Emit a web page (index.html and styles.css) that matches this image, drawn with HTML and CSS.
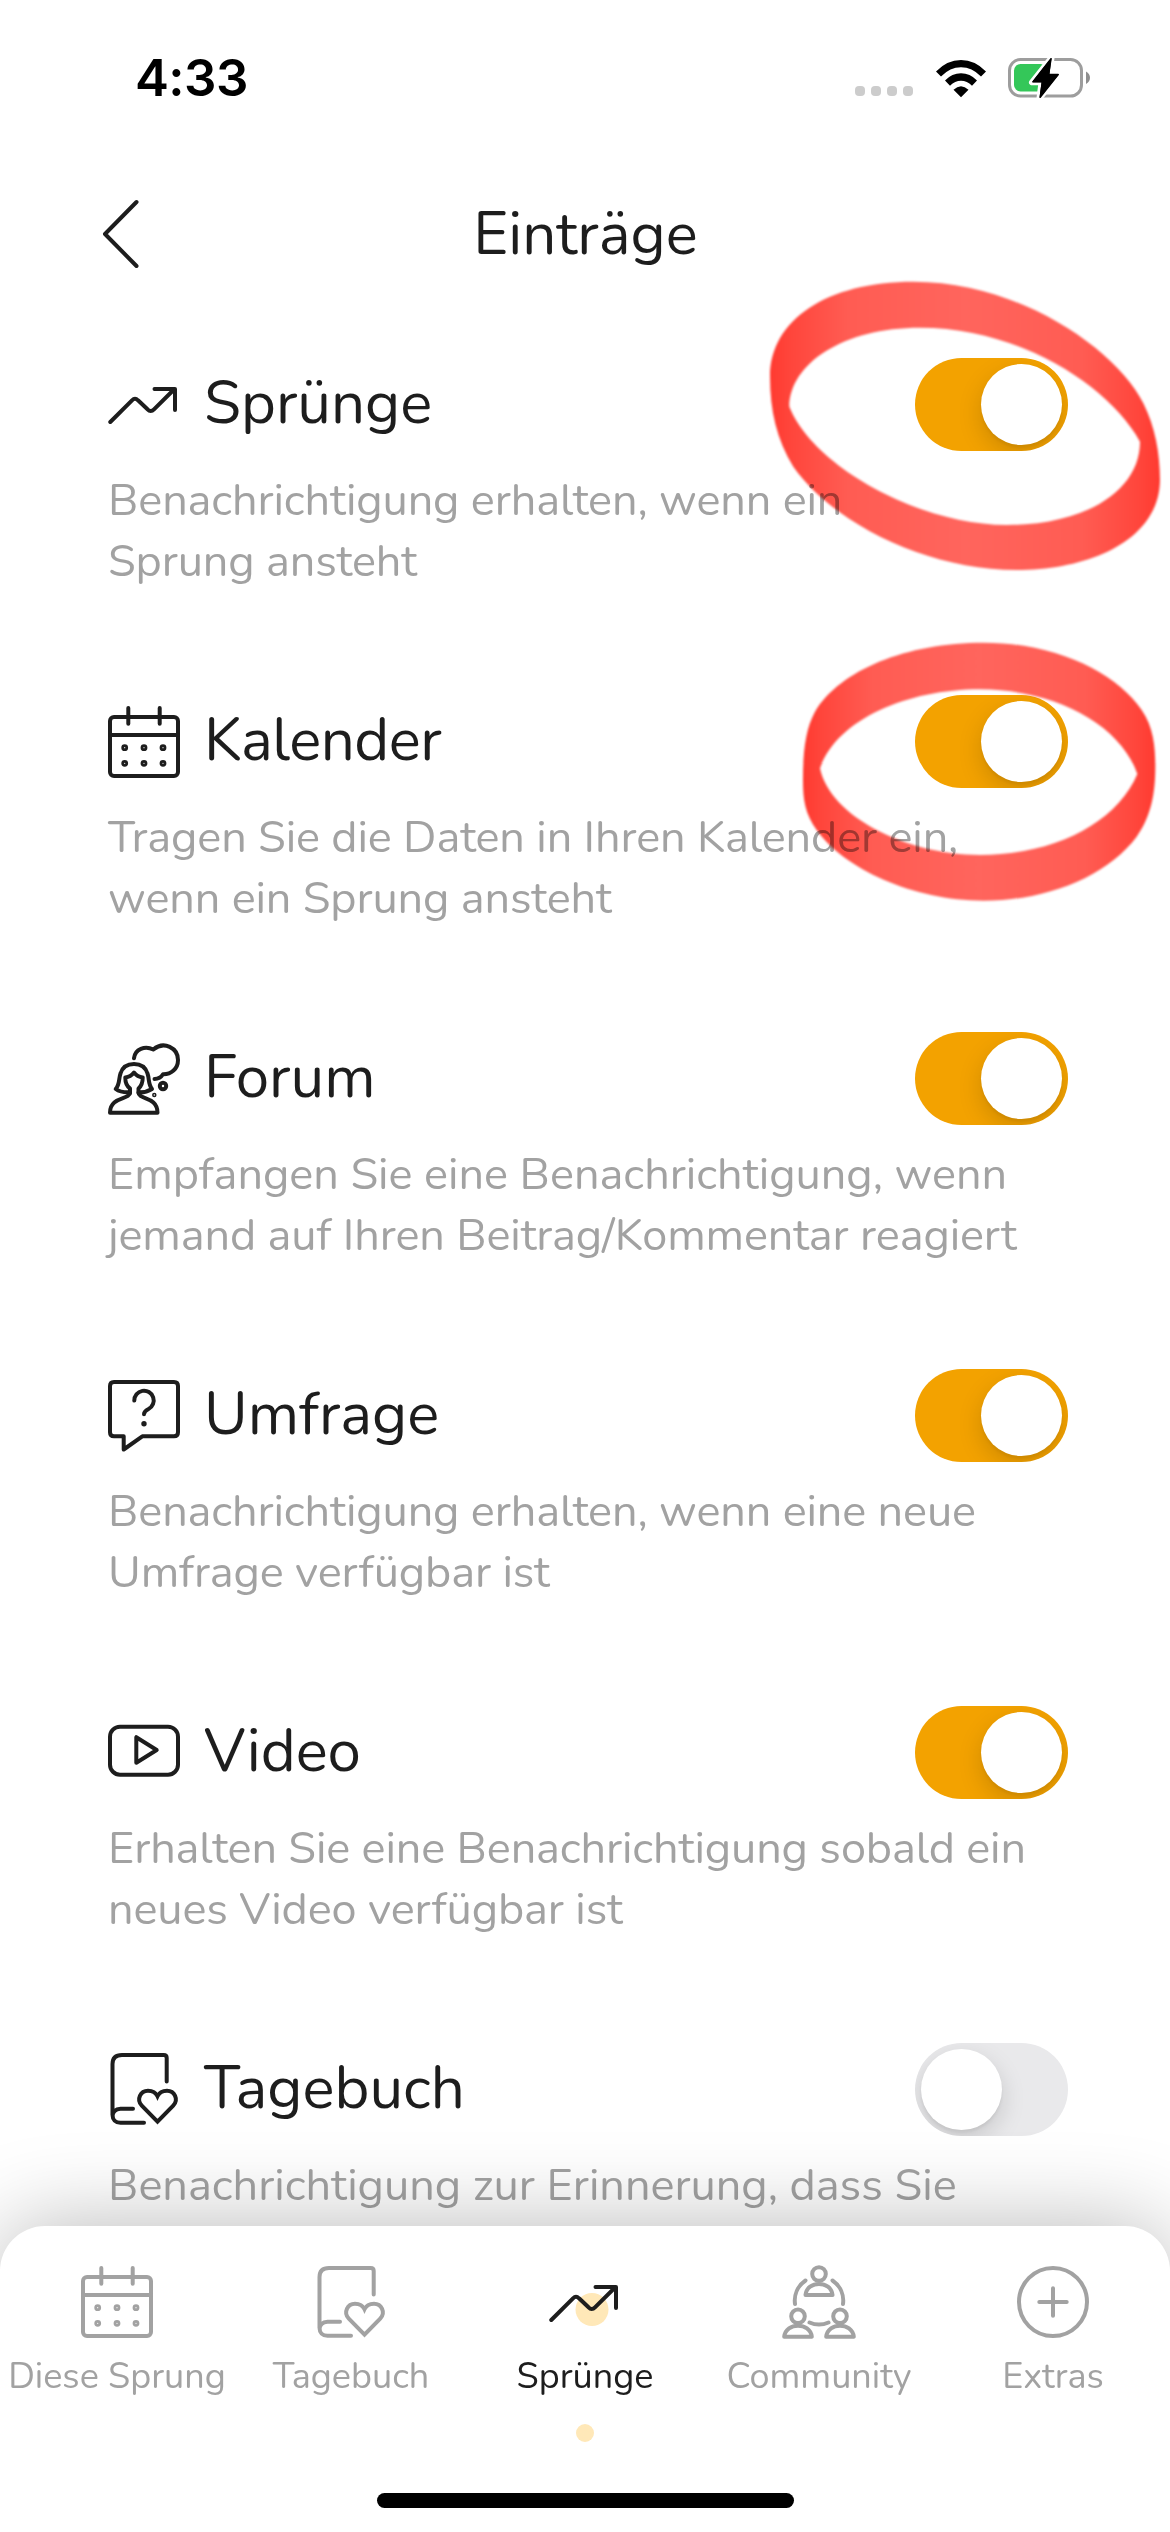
FILE: index.html
```html
<!DOCTYPE html>
<html lang="de">
<head>
<meta charset="utf-8">
<title>Einträge</title>
<link rel="stylesheet" href="styles.css">
</head>
<body>
<svg class="sprite" aria-hidden="true">
  <symbol id="i-trend" viewBox="0 0 72 72">
    <path d="M2.3 54 24 32.3Q27 29.3 30 32.3L39.5 41.3Q42.7 44.6 46 41.3L66.5 21M46.5 21H67V42"/>
  </symbol>
  <symbol id="i-calendar" viewBox="0 0 72 72">
    <rect x="2" y="11" width="68" height="59" rx="4"/>
    <path d="M2 29H70M20.3 2V17.7M51.7 2V17.7"/>
    <g stroke-width="2.8"><circle cx="16.7" cy="41.7" r="2"/><circle cx="36" cy="41.7" r="2"/><circle cx="55" cy="41.7" r="2"/><circle cx="16.7" cy="57.3" r="2"/><circle cx="36" cy="57.3" r="2"/><circle cx="55" cy="57.3" r="2"/></g>
  </symbol>
  <symbol id="i-forum" viewBox="0 0 72 72">
    <path d="M26 15.3C27 6 37 2.5 45.3 6.5C56-2.5 70 5 70 17C70 26 63 31.5 55 31.3C53 34.5 50.5 36 46.5 36"/>
    <circle cx="55" cy="43" r="3.2"/>
    <circle cx="46.3" cy="52" r="1.5" stroke-width="1.5"/>
    <path d="M21.5 49.3C16 49.5 11 48.5 7.7 46C12 41 10.5 36 12.5 30.5C14.5 24 20 21 26 21C32 21 37.5 24 39.5 30.5C41.5 36 40 41 44 46C40 48.5 36 49.5 31 49.3"/>
    <path d="M22 50V45.5C18.5 43 17.3 40 17.3 34.5C21 34 24 32 26 29.5C28 32 31 34 34.7 34.5C34.7 40 33.5 43 30.5 45.5V50"/>
    <path d="M22 49.5C22 57 2 53 2 69.7H49.5C49.5 53 30.5 57 30.5 49.5"/>
  </symbol>
  <symbol id="i-survey" viewBox="0 0 72 72">
    <path d="M6 2H66Q70 2 70 6V52.3Q70 56.3 66 56.3H34.3L15.7 69.5V56.3H6Q2 56.3 2 52.3V6Q2 2 6 2Z"/>
    <path d="M26.3 20.6A9.7 9.7 0 1 1 40.5 29Q36 31.2 36 34.3"/>
    <circle class="solid" cx="36" cy="43.7" r="2.7"/>
  </symbol>
  <symbol id="i-video" viewBox="0 0 72 72">
    <rect x="2" y="9.7" width="68" height="48" rx="10"/>
    <path d="M28.3 20.2V45.8L48.7 33Z"/>
  </symbol>
  <symbol id="i-diary" viewBox="0 0 72 72">
    <path d="M58.7 28.5V5Q58.7 2 55.7 2H14Q4.5 2 4.5 11V62M36 69.8H12.5C2 69.8 2 55.8 12.5 55.8H25"/>
    <path stroke-linejoin="miter" d="M49.5 68.6 33.8 52.6C28 46.5 32.5 37.7 40 37.7C45 37.7 48 40 49.5 43.2C51 40 54 37.7 59 37.7C66.5 37.7 71 46.5 65.2 52.6Z"/>
  </symbol>
  <symbol id="i-community" viewBox="-2 -2 76 76">
    <circle cx="36" cy="8" r="6.8"/><path d="M22.5 29C24 14.3 48 14.3 49.5 29Z"/>
    <circle cx="15" cy="50.3" r="6.8"/><path d="M1.2 70.8C3 56 27 56 28.8 70.8Z"/>
    <circle cx="57" cy="50.3" r="6.8"/><path d="M43.2 70.8C45 56 69 56 70.8 70.8Z"/>
    <path d="M12 38C10.8 29 14.5 20 22.5 14.5M60 38C61.2 29 57.5 20 49.5 14.5M26.5 56.5Q36 60.7 45.5 56.5"/>
  </symbol>
  <symbol id="i-plus" viewBox="0 0 72 72">
    <circle cx="36" cy="36" r="34"/><path d="M22.3 36H49.7M36 22.3V49.7"/>
  </symbol>
</svg>

<div class="screen">
  <div class="status">
    <span class="time">4:33</span>
    <div class="indicators">
      <div class="dots"><i></i><i></i><i></i><i></i></div>
      <svg class="wifi" width="50" height="38" viewBox="0 0 50 38">
        <path d="M0 11.5Q11 0 25 0T50 11.5L45 16.5Q36 7.3 25 7.3T5 16.5Z"/>
        <path d="M9 20.5Q16 13.3 25 13.3T41 20.5L36 25.7Q31 20.8 25 20.8T14 25.7Z"/>
        <path d="M17.5 29.8Q25 22.8 32.5 29.8L25 37.3Z"/>
      </svg>
      <svg class="battery" width="84" height="42" viewBox="0 0 84 42">
        <rect x="1.5" y="2.5" width="72" height="36.6" rx="11" fill="none" stroke="#9d9d9d" stroke-width="3"/>
        <rect x="6" y="7" width="33" height="27.5" rx="6.5" fill="#34c759"/>
        <path d="M78 14.5Q82 17 82 20.8T78 27Z" fill="#8e8e8e"/>
        <path d="M43.5.8 24 25.3H33.5L31.5 41.2 51 17.2H41.5Z" fill="#000" stroke="#fff" stroke-width="6" stroke-linejoin="round" paint-order="stroke"/>
        <path d="M43 1.8 25 24.7H34.5L32.2 40.2 50.2 17.6H40.5Z" fill="#000" stroke="#000" stroke-width="1.5" stroke-linejoin="round"/>
      </svg>
    </div>
  </div>

  <header class="header">
    <svg class="back" width="40" height="72" viewBox="0 0 40 72"><path d="M35.5 4 4 36 35.5 68"/></svg>
    <h1>Einträge</h1>
  </header>

  <main class="list">
    <section class="item">
      <div class="row"><svg class="icon raised"><use href="#i-trend"/></svg><h2>Sprünge</h2><span class="toggle on"></span></div>
      <p>Benachrichtigung erhalten, wenn ein<br>Sprung ansteht</p>
    </section>
    <section class="item">
      <div class="row"><svg class="icon"><use href="#i-calendar"/></svg><h2 class="tight">Kalender</h2><span class="toggle on"></span></div>
      <p>Tragen Sie die Daten in Ihren Kalender ein,<br>wenn ein Sprung ansteht</p>
    </section>
    <section class="item">
      <div class="row"><svg class="icon"><use href="#i-forum"/></svg><h2>Forum</h2><span class="toggle on"></span></div>
      <p><span class="normal">Empfangen Sie eine Benachrichtigung, wenn</span><br>jemand auf Ihren Beitrag/Kommentar reagiert</p>
    </section>
    <section class="item">
      <div class="row"><svg class="icon"><use href="#i-survey"/></svg><h2>Umfrage</h2><span class="toggle on"></span></div>
      <p>Benachrichtigung erhalten, wenn eine neue<br>Umfrage verfügbar ist</p>
    </section>
    <section class="item">
      <div class="row"><svg class="icon"><use href="#i-video"/></svg><h2>Video</h2><span class="toggle on"></span></div>
      <p>Erhalten Sie eine Benachrichtigung sobald ein<br>neues Video verfügbar ist</p>
    </section>
    <section class="item">
      <div class="row"><svg class="icon raised"><use href="#i-diary"/></svg><h2>Tagebuch</h2><span class="toggle"></span></div>
      <p><span class="normal">Benachrichtigung zur Erinnerung, dass Sie</span></p>
    </section>
  </main>

  <nav class="tabs">
    <a class="tab"><svg class="icon"><use href="#i-calendar"/></svg><span>Diese Sprung</span></a>
    <a class="tab"><svg class="icon"><use href="#i-diary"/></svg><span>Tagebuch</span></a>
    <a class="tab active"><svg class="icon"><circle class="glow" cx="43" cy="43.5" r="16.5"/><use href="#i-trend"/></svg><span>Sprünge</span><i class="marker"></i></a>
    <a class="tab"><svg class="icon wide"><use href="#i-community"/></svg><span>Community</span></a>
    <a class="tab"><svg class="icon"><use href="#i-plus"/></svg><span>Extras</span></a>
    <div class="home"></div>
  </nav>

  <!-- marker strokes circling the first two switches -->
  <svg class="marks" width="1170" height="960" viewBox="0 0 1170 960">
    <defs>
      <linearGradient id="ink">
        <stop offset="0" stop-color="#ff3a30"/><stop offset=".05" stop-color="#ff453b"/><stop offset=".2" stop-color="#ff5c53"/>
        <stop offset=".5" stop-color="#ff655d"/>
        <stop offset=".8" stop-color="#ff5c53"/><stop offset=".95" stop-color="#ff453b"/><stop offset="1" stop-color="#ff3a30"/>
      </linearGradient>
    </defs>
    <g fill="url(#ink)" fill-rule="evenodd">
      <path transform="translate(740 260) scale(.33333)" d="M90 350C90 180 260 65 520 65C840 65 1130 270 1210 430C1245 500 1260 580 1260 660C1258 840 1050 930 830 930C560 930 280 790 160 620C110 540 90 450 90 350ZM148 440C150 310 310 203 540 203C840 203 1110 380 1200 545C1200 690 1040 795 800 795C540 795 220 620 148 440Z"/>
      <path transform="translate(780 620) scale(.33333)" d="M69 480C69 400 75 330 105 275C180 150 380 68 610 68C830 68 1010 160 1085 270C1120 320 1126 380 1126 440C1126 540 1105 600 1070 650C980 770 800 842 610 842C400 842 190 745 110 630C75 580 69 540 69 480ZM120 445C170 300 380 208 600 208C820 208 1020 310 1072 462C1010 610 820 705 600 705C380 705 150 590 120 445Z"/>
    </g>
  </svg>
</div>
</body>
</html>
```
FILE: styles.css
```css
* { box-sizing: border-box; }
body { margin: 0; background: #fff; font-family: Nunito, Lato, sans-serif; color: #1d1d1d; }
h1, h2, p { margin: 0; font-weight: 400; }
.sprite { display: none; }

.screen { position: relative; width: 1170px; height: 2532px; overflow: hidden; display: flex; flex-direction: column; background: #fff; }

.status { flex: none; height: 156px; padding: 0 78px 0 135px; display: flex; justify-content: space-between; align-items: center; color: #000; }
.time { font: 600 51px/62px Inter, sans-serif; letter-spacing: -.6px; }
.indicators { display: flex; align-items: flex-end; height: 42px; }
.dots { display: flex; gap: 6px; margin: 0 23px 3px 0; }
.dots i { width: 10px; height: 10px; border-radius: 4px; background: #ccc; }
.wifi { margin: 0 22px 1px 0; }

.header { flex: none; height: 155px; padding: 0 100px 0 101px; display: grid; grid-template-columns: 40px 1fr 40px; align-items: center; text-align: center; }
h1, h2 { font-size: 60px; line-height: 82px; }
.back path { fill: none; stroke: #1d1d1d; stroke-width: 4; stroke-linecap: round; stroke-linejoin: round; }

.list { flex: 1; min-height: 0; overflow: hidden; padding: 47px 102px 0 108px; }
.item { height: 337px; }
.row { display: flex; align-items: center; height: 93px; margin-bottom: 19px; }
.row h2 { flex: 1; padding: 0 0 3px 24px; }
.row .tight { letter-spacing: -.5px; }
.item p { font-size: 45px; line-height: 61px; letter-spacing: -.11px; color: #a2a2a2; white-space: nowrap; }
.normal { letter-spacing: 0; }

.icon { flex: none; width: 72px; height: 72px; fill: none; stroke: currentColor; stroke-width: 4; stroke-linecap: round; stroke-linejoin: round; }
.icon.raised { margin-bottom: 2px; }
.icon.wide { width: 76px; height: 76px; margin: -2px; }
.solid { fill: currentColor; stroke: none; }

.toggle { width: 153px; height: 93px; padding: 6px; border-radius: 47px; background: #e9e9eb; display: flex; overflow: hidden; }
.toggle::before { content: ""; width: 81px; height: 81px; border-radius: 50%; background: #fff; box-shadow: 0 9px 24px rgba(0, 0, 0, .15), 0 3px 3px rgba(0, 0, 0, .05); }
.toggle.on { background: #f3a200; justify-content: flex-end; }

.tabs { flex: none; position: relative; height: 306px; margin-top: -48px; padding-top: 40px; display: grid; grid-template-columns: repeat(5, 1fr); grid-template-rows: 1fr auto; background: #fff; border-radius: 45px 45px 0 0; box-shadow: 0 0 90px rgba(0, 0, 0, .28); }
.tab { display: flex; flex-direction: column; align-items: center; color: #a2a2a2; font-size: 36px; line-height: 49px; white-space: nowrap; }
.tab span { margin-top: 14px; }
.active { color: #1d1d1d; }
.glow { fill: #ffe8b8; stroke: none; }
.marker { width: 18px; height: 18px; margin-top: 23px; border-radius: 50%; background: #ffe8b8; }
.home { grid-column: 1 / -1; justify-self: center; width: 417px; height: 15px; margin-bottom: 24px; border-radius: 8px; background: #000; }

.marks { position: absolute; left: 0; top: 0; mix-blend-mode: multiply; filter: blur(1px); pointer-events: none; }
```
